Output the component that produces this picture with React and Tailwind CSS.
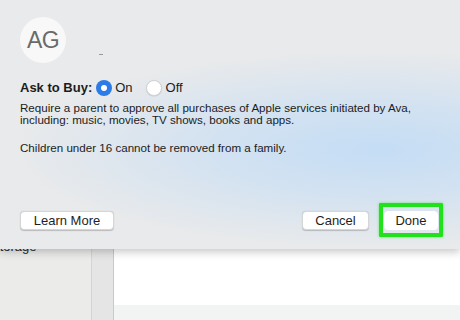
import React from 'react';

function Radio({ checked }) {
  if (checked) {
    return (
      <span className="flex h-[16px] w-[16px] items-center justify-center rounded-full bg-[#2d7be6]">
        <span className="h-[6px] w-[6px] rounded-full bg-white" />
      </span>
    );
  }
  return (
    <span className="block h-[16px] w-[16px] rounded-full border border-[#d2d2d2] bg-white shadow-[0_0.5px_1px_rgba(0,0,0,0.12)]" />
  );
}

function Button({ children, className = '' }) {
  return (
    <button
      type="button"
      className={`h-[19px] rounded-[4px] border border-[#d6d6d6] bg-white text-[13px] leading-none text-[#1e1e1e] shadow-[0_0.5px_1px_rgba(0,0,0,0.2)] ${className}`}
    >
      {children}
    </button>
  );
}

export default function App() {
  return (
    <div className="relative h-[320px] w-[460px] overflow-hidden bg-white font-['Liberation_Sans',Arial,sans-serif]">
      {/* window behind the sheet */}
      <div className="flex h-full">
        <div className="flex w-[92px] flex-col border-r border-[#d4d4d4] bg-[#ebebea]">
          <p className="ml-[-9px] mt-[237px] text-[13px] text-[#2a2a2a]">Storage</p>
        </div>
        <div className="w-[22px] border-r border-[#c9c9c9] bg-[#e5e5e5]" />
        <div className="flex flex-1 flex-col">
          <div className="flex-1 bg-white" />
          <div className="h-[15px] bg-[#f2f3f3]" />
        </div>
      </div>

      {/* sheet */}
      <section className="absolute left-0 top-0 flex h-[249px] w-full flex-col bg-[#ebebeb] bg-[radial-gradient(ellipse_80%_40%_at_82%_60%,#c4ddf5_0%,#d3e2f1_45%,#e9eaeb_100%)] px-[20px] shadow-[0_3px_8px_rgba(0,0,0,0.22)]">
        <div className="mt-[17px] flex items-end">
          <div className="flex h-[46px] w-[46px] items-center justify-center rounded-full bg-[#f8f8f8]">
            <span className="text-[23px] tracking-[-0.5px] text-[#6a6a6a]">AG</span>
          </div>
          <span className="mb-[8px] ml-[33px] h-px w-[4px] bg-[#9a9a9a]" />
        </div>

        <div className="mt-[15px] flex items-center text-[13px] text-[#1c1c1c]">
          <span className="font-bold">Ask to Buy:</span>
          <span className="ml-[4px]">
            <Radio checked />
          </span>
          <span className="ml-[3px]">On</span>
          <span className="ml-[13px]">
            <Radio />
          </span>
          <span className="ml-[4px]">Off</span>
        </div>

        <p className="mt-[4px] text-[11.6px] leading-[12px] text-[#1c1c1c]">
          Require a parent to approve all purchases of Apple services initiated by Ava,
          <br />
          including: music, movies, TV shows, books and apps.
        </p>
        <p className="mt-[16px] text-[11.6px] leading-[12px] text-[#1c1c1c]">
          Children under 16 cannot be removed from a family.
        </p>

        <div className="mt-auto mb-[12px] flex items-center">
          <Button className="w-[94px]">Learn More</Button>
          <div className="ml-auto flex items-center">
            <Button className="w-[67px]">Cancel</Button>
            <div className="ml-[10px] mr-[-3px] rounded-[1px] border-[4px] border-[#21e11d] p-[1px] shadow-[0_0_3px_rgba(33,225,29,0.6)]">
              <Button className="w-[54px] border-white shadow-none">Done</Button>
            </div>
          </div>
        </div>
      </section>
    </div>
  );
}
